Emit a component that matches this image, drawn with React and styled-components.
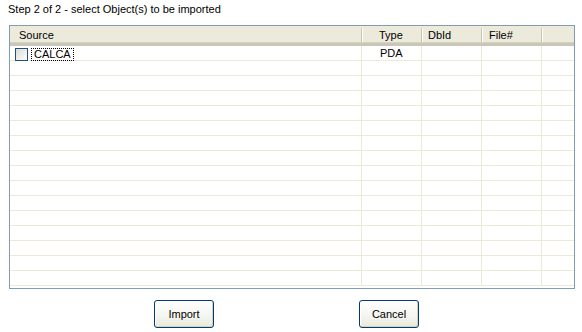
import React from "react";
import styled, { createGlobalStyle } from "styled-components";

const GlobalStyle = createGlobalStyle`
  html, body {
    margin: 0;
    padding: 0;
    background: #fff;
  }
  body {
    font-family: "Liberation Sans", Arial, sans-serif;
    font-size: 11px;
    color: #000;
  }
`;

const columns = [
  { key: "source", label: "Source", width: 352, pad: 9 },
  { key: "type", label: "Type", width: 60, pad: 17 },
  { key: "dbid", label: "DbId", width: 60, pad: 6 },
  { key: "file", label: "File#", width: 60, pad: 7 },
  { key: "filler", label: "", width: 32, pad: 0, last: true },
];

const rows = [{ source: "CALCA", type: "PDA", dbid: "", file: "" }];
const ROW_COUNT = 16;

function App() {
  const filled = Array.from({ length: ROW_COUNT }, (_, i) => rows[i] || null);

  return (
    <>
      <GlobalStyle />
      <Page>
        <Title>Step 2 of 2 - select Object(s) to be imported</Title>
        <ListView>
          <Header>
            {columns.map((c) => (
              <HeaderCell key={c.key} $width={c.width} $pad={c.pad} $last={c.last}>
                {c.label}
              </HeaderCell>
            ))}
          </Header>
          <Body>
            {filled.map((row, i) => (
              <Row key={i}>
                {columns.map((c) => (
                  <Cell key={c.key} $width={c.width} $last={c.last} $pad={c.key === "type" ? 18 : 5}>
                    {row && c.key === "source" ? (
                      <>
                        <CheckBox />
                        <FocusLabel>{row.source}</FocusLabel>
                      </>
                    ) : row ? (
                      row[c.key]
                    ) : null}
                  </Cell>
                ))}
              </Row>
            ))}
          </Body>
        </ListView>
        <Buttons>
          <Button>Import</Button>
          <Button>Cancel</Button>
        </Buttons>
      </Page>
    </>
  );
}

export default App;

const Page = styled.div`
  width: 582px;
  height: 332px;
  display: flex;
  flex-direction: column;
`;

const Title = styled.div`
  padding: 3px 0 0 8px;
  height: 14px;
  line-height: 13px;
`;

const ListView = styled.div`
  margin: 8px 0 0 9px;
  width: 564px;
  height: 262px;
  border: 1px solid #7f9db9;
  background: #fff;
  overflow: hidden;
`;

const Header = styled.div`
  display: flex;
  height: 17px;
  background: #ebeadb;
  border-bottom: 3px solid #cbc7b8;
  box-shadow: inset 0 -1px 0 #d6d2c2;
`;

const HeaderCell = styled.div`
  position: relative;
  flex: 0 0 ${(p) => p.$width}px;
  padding-left: ${(p) => p.$pad}px;
  box-sizing: border-box;
  line-height: 18px;
  white-space: nowrap;

  &::after {
    content: "";
    display: ${(p) => (p.$last ? "none" : "block")};
    position: absolute;
    right: 0;
    top: 2px;
    width: 1px;
    height: 14px;
    background: #c7c5b2;
    box-shadow: 1px 0 0 #fff;
  }
`;

const Body = styled.div`
  display: flex;
  flex-direction: column;
`;

const Row = styled.div`
  display: flex;
  height: 14px;
  border-bottom: 1px solid #ece9d8;
`;

const Cell = styled.div`
  flex: 0 0 ${(p) => p.$width}px;
  box-sizing: border-box;
  border-right: ${(p) => (p.$last ? "none" : "1px solid #ece9d8")};
  padding-left: ${(p) => p.$pad}px;
  display: flex;
  align-items: center;
  line-height: 13px;
  white-space: nowrap;
`;

const CheckBox = styled.span`
  width: 11px;
  height: 11px;
  margin-top: 2px;
  border: 1px solid #1c5180;
  background: linear-gradient(135deg, #dcdcd7 0%, #f3f3ef 70%, #fff 100%);
  flex: 0 0 auto;
`;

const FocusLabel = styled.span`
  margin-left: 4px;
  margin-top: 2px;
  padding: 0 2px;
  height: 11px;
  line-height: 11px;
  outline: 1px dotted #000;
  outline-offset: 0;
`;

const Buttons = styled.div`
  display: flex;
  margin: 11px 0 0 154px;
  gap: 145px;
`;

const Button = styled.button`
  width: 60px;
  height: 28px;
  box-sizing: border-box;
  border: 1px solid #003c74;
  border-radius: 3px;
  background: linear-gradient(#ffffff 0%, #f4f4f0 60%, #ece9d8 100%);
  box-shadow: inset -1px -1px 0 #d6d0c5, inset 1px 1px 0 #fff;
  font-family: "Liberation Sans", Arial, sans-serif;
  font-size: 11px;
  color: #000;
  padding: 0;
`;
